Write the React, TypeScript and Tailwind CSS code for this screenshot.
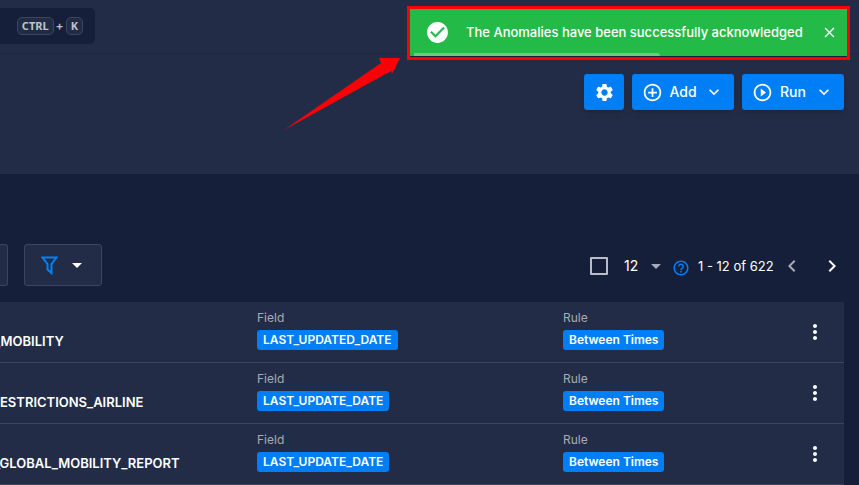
import type { ReactNode } from "react";
import {
  MdAddCircleOutline,
  MdArrowDropDown,
  MdCheckCircle,
  MdChevronLeft,
  MdChevronRight,
  MdClose,
  MdExpandMore,
  MdHelpOutline,
  MdMoreVert,
  MdPlayCircleOutline,
  MdSettings,
} from "react-icons/md";

const rows = [
  { name: "_MOBILITY", shift: "-ml-1.5", field: "LAST_UPDATED_DATE", rule: "Between Times" },
  { name: "ESTRICTIONS_AIRLINE", shift: "ml-0", field: "LAST_UPDATE_DATE", rule: "Between Times" },
  { name: "_GLOBAL_MOBILITY_REPORT", shift: "-ml-1.5", field: "LAST_UPDATE_DATE", rule: "Between Times" },
];

function Key({ children }: { children: ReactNode }) {
  return (
    <kbd className="flex h-[18px] items-center rounded-[5px] border border-[#3e465d] bg-[#222b45] px-1 font-['Noto_Sans',sans-serif] text-[11px] font-bold text-[#bfc2ca]">
      {children}
    </kbd>
  );
}

function MenuButton({ icon, label }: { icon: ReactNode; label: string }) {
  return (
    <button
      type="button"
      className="flex h-9 w-[102px] items-center rounded-[3px] bg-[#007ef5] pl-2.5 text-sm font-medium shadow-md"
    >
      {icon}
      <span className="ml-1.5 w-7">{label}</span>
      <MdExpandMore size={20} className="ml-[7px]" />
    </button>
  );
}

function Tagged({ label, value }: { label: string; value: string }) {
  return (
    <div className="flex flex-col items-start">
      <span className="h-[22px] text-xs leading-5 text-[#a7abb5]">{label}</span>
      <span className="h-5 rounded-[3px] bg-[#007ef5] px-1.5 text-xs leading-5 font-semibold">{value}</span>
    </div>
  );
}

function Toast() {
  return (
    <div
      role="status"
      className="absolute top-1.5 right-[9px] h-[54px] w-[443px] border-3 border-[#fb0007] bg-[#161f3a]"
    >
      <div className="relative flex h-[47px] items-center bg-[#23ba47] pr-[9px] pl-[15px]">
        <MdCheckCircle size={25} />
        <p className="ml-4 flex-1 text-[13px] font-medium whitespace-nowrap">
          The Anomalies have been successfully acknowledged
        </p>
        <button type="button" aria-label="Close">
          <MdClose size={17} />
        </button>
        <div className="absolute bottom-0 left-1 h-[3px] w-[246px] rounded-tr-sm bg-[#65cf7e]" />
      </div>
    </div>
  );
}

export default function App() {
  return (
    <div className="relative h-screen overflow-hidden bg-[#161f3a] font-[Inter,'Liberation_Sans',sans-serif] text-white">
      <header className="h-[54px] border-b border-[#1f273c] bg-[#232c46] pt-2">
        <div className="flex h-9 w-[95px] items-center justify-end rounded-r-[5px] bg-[#161f3a] pr-3">
          <Key>CTRL</Key>
          <span className="px-0.5 text-xs font-semibold text-[#bfc2ca]">+</span>
          <Key>K</Key>
        </div>
      </header>

      <section className="flex h-[120px] items-start justify-end gap-2 bg-[#232c46] pt-5 pr-[15px]">
        <button
          type="button"
          aria-label="Settings"
          className="flex h-9 w-10 items-center justify-center rounded-[3px] bg-[#007ef5] shadow-md"
        >
          <MdSettings size={21} />
        </button>
        <MenuButton icon={<MdAddCircleOutline size={21} />} label="Add" />
        <MenuButton icon={<MdPlayCircleOutline size={21} />} label="Run" />
      </section>

      <main className="pt-[70px] pr-[15px]">
        <div className="flex h-[42px] items-center">
          <div className="h-full w-2 rounded-r-[3px] border border-l-0 border-[#3c455d] bg-[#232c46]" />
          <button
            type="button"
            aria-label="Filter"
            className="ml-4 flex h-full w-[78px] items-center rounded-[3px] border border-[#3c455d] bg-[#232c46] pl-4"
          >
            <svg width="17" height="19" viewBox="0 0 17 19" fill="none" stroke="#0081f5" strokeWidth="2">
              <path d="M1.5 1.5H15.5L10.5 8V17L6.5 13.5V8Z" />
            </svg>
            <MdArrowDropDown size={24} className="ml-[7px]" />
          </button>

          <div className="ml-auto flex h-full items-center pt-0.5">
            <input
              type="checkbox"
              aria-label="Select all"
              className="size-[18px] appearance-none rounded-[1px] border-2 border-[#b9bcc4]"
            />
            <label className="relative ml-4 flex items-center">
              <select
                aria-label="Items per page"
                defaultValue="12"
                className="w-10 appearance-none bg-transparent text-sm"
              >
                <option>12</option>
                <option>24</option>
              </select>
              <MdArrowDropDown size={24} className="pointer-events-none absolute -right-1 text-[#a7abb5]" />
            </label>
            <MdHelpOutline size={18} className="mt-1 ml-2 text-[#007ef5]" />
            <span className="ml-2 w-[74px] pt-0.5 text-[13px] whitespace-nowrap">1 - 12 of 622</span>
            <button type="button" aria-label="Previous page" className="ml-2 text-[#a7abb5]">
              <MdChevronLeft size={24} />
            </button>
            <button type="button" aria-label="Next page" className="ml-4">
              <MdChevronRight size={24} />
            </button>
          </div>
        </div>

        <table className="mt-4 w-full table-fixed border-separate border-spacing-0 bg-[#232c46]">
          <colgroup>
            <col className="w-[257px]" />
            <col className="w-[306px]" />
            <col />
            <col className="w-[58px]" />
          </colgroup>
          <tbody>
            {rows.map((row) => (
              <tr key={row.name} className="h-[61px] *:border-b *:border-[#3c455d]">
                <td className="overflow-hidden pt-[18px]">
                  <span className={`block text-[13px] leading-5 font-semibold ${row.shift}`}>{row.name}</span>
                </td>
                <td className="pt-1.5 pb-3">
                  <Tagged label="Field" value={row.field} />
                </td>
                <td className="pt-1.5 pb-3">
                  <Tagged label="Rule" value={row.rule} />
                </td>
                <td className="pl-[17px]">
                  <button type="button" aria-label="Row actions" className="block">
                    <MdMoreVert size={24} />
                  </button>
                </td>
              </tr>
            ))}
          </tbody>
        </table>
      </main>

      <Toast />
      <svg
        className="pointer-events-none absolute top-[57px] right-[458px]"
        width="117"
        height="74"
        viewBox="0 0 117 74"
        aria-hidden="true"
      >
        <path d="M0 73L97 6L95 1L116 1L108 17L107 14Z" fill="#fb0007" />
      </svg>
    </div>
  );
}
